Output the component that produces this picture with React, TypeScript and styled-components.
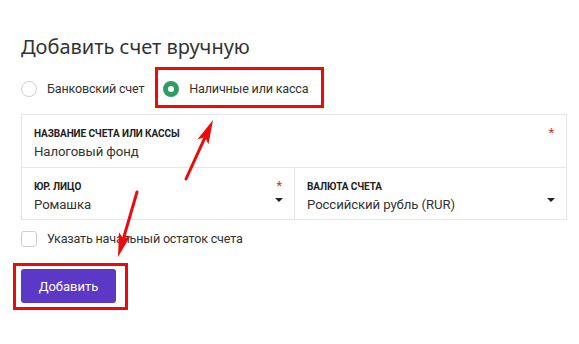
import React from "react";
import styled, { createGlobalStyle } from "styled-components";

const GlobalStyle = createGlobalStyle`
  html, body { margin: 0; padding: 0; background: #ffffff; }
  body { font-family: Roboto, "Noto Sans", sans-serif; color: #333333; }
  * { box-sizing: border-box; }
`;

const Page = styled.div`
  position: relative;
  width: 579px;
  height: 344px;
  padding: 35px 12px 0 21px;
  overflow: hidden;
`;

const Title = styled.h1`
  margin: 0;
  font-family: "Noto Sans", "Open Sans", sans-serif;
  font-size: 20px;
  line-height: 24px;
  font-weight: 400;
  color: #333333;
`;

const RadioRow = styled.div`
  display: flex;
  align-items: center;
  gap: 19px;
  margin-top: 22px;
  height: 16px;
`;

const Option = styled.label<{ $highlight?: boolean }>`
  position: relative;
  display: flex;
  align-items: center;
  gap: 10px;
  font-size: 12.6px;
  letter-spacing: -0.2px;
  color: #333333;
  line-height: 16px;
  &::after {
    content: "";
    display: ${(p) => (p.$highlight ? "block" : "none")};
    position: absolute;
    left: -8px;
    right: -16px;
    top: -14px;
    bottom: -11px;
    border: 3px solid #ee0a0a;
    pointer-events: none;
  }
`;

const RadioCircle = styled.span<{ $checked?: boolean }>`
  width: 16px;
  height: 16px;
  border-radius: 50%;
  flex: none;
  border: ${(p) => (p.$checked ? "5px solid #2e9c64" : "1px solid #cfcfcf")};
  background: #ffffff;
`;

const Panel = styled.div`
  margin-top: 17px;
  width: 546px;
  border: 1px solid #e6e6e6;
  display: grid;
  grid-template-columns: 273px 1fr;
  grid-template-rows: 52px 52px;
`;

const Cell = styled.div<{ $wide?: boolean; $divider?: boolean; $bottom?: boolean }>`
  position: relative;
  grid-column: ${(p) => (p.$wide ? "1 / 3" : "auto")};
  padding: 12px 14px 0 12px;
  border-top: ${(p) => (p.$bottom ? "1px solid #e6e6e6" : "none")};
  border-right: ${(p) => (p.$divider ? "1px solid #e6e6e6" : "none")};
`;

const Label = styled.div`
  font-family: Roboto, "Noto Sans", sans-serif;
  font-weight: 700;
  font-size: 10px;
  line-height: 14px;
  color: #222222;
  text-transform: uppercase;
  letter-spacing: -0.1px;
`;

const Value = styled.div`
  font-size: 13.2px;
  letter-spacing: -0.1px;
  line-height: 20px;
  color: #333333;
  margin-top: 1px;
`;

const Required = styled.span`
  position: absolute;
  right: 12px;
  top: 11px;
  color: #d93030;
  font-size: 13px;
  line-height: 14px;
`;

const Caret = styled.span`
  position: absolute;
  right: 11px;
  top: 30px;
  width: 0;
  height: 0;
  border-left: 4px solid transparent;
  border-right: 4px solid transparent;
  border-top: 4px solid #222222;
`;

const CheckRow = styled.label`
  display: flex;
  align-items: center;
  gap: 10px;
  margin-top: 11px;
  font-size: 12.6px;
  letter-spacing: -0.2px;
  line-height: 16px;
  color: #333333;
`;

const CheckBox = styled.span`
  width: 16px;
  height: 16px;
  flex: none;
  border: 1px solid #cfcfcf;
  border-radius: 3px;
  background: #ffffff;
`;

const ButtonWrap = styled.div`
  position: relative;
  display: inline-block;
  margin-top: 22px;
  &::after {
    content: "";
    position: absolute;
    left: -8px;
    right: -12px;
    top: -6px;
    bottom: -7px;
    border: 3px solid #ee0a0a;
    pointer-events: none;
  }
`;

const Button = styled.button`
  display: block;
  width: 95px;
  height: 34px;
  border: none;
  border-radius: 3px;
  background: #5c38c6;
  color: #ffffff;
  font-family: Roboto, "Noto Sans", sans-serif;
  font-size: 13px;
  padding: 0;
`;

const Overlay = styled.svg`
  position: absolute;
  left: 0;
  top: 0;
  width: 579px;
  height: 344px;
  pointer-events: none;
`;

function Arrow({ x1, y1, x2, y2 }: { x1: number; y1: number; x2: number; y2: number }) {
  const dx = x2 - x1;
  const dy = y2 - y1;
  const len = Math.sqrt(dx * dx + dy * dy);
  const ux = dx / len;
  const uy = dy / len;
  const headLen = 24;
  const headW = 6;
  const bx = x2 - ux * headLen;
  const by = y2 - uy * headLen;
  const px = -uy;
  const py = ux;
  return (
    <g>
      <line x1={x1} y1={y1} x2={bx + ux * 4} y2={by + uy * 4} stroke="#ee0a0a" strokeWidth={3} strokeLinecap="round" />
      <polygon
        points={`${x2},${y2} ${bx + px * headW},${by + py * headW} ${bx + ux * 5},${by + uy * 5} ${bx - px * headW},${by - py * headW}`}
        fill="#ee0a0a"
      />
    </g>
  );
}

export default function App() {
  return (
    <>
      <GlobalStyle />
      <Page>
        <Title>Добавить счет вручную</Title>
        <RadioRow>
          <Option>
            <RadioCircle />
            Банковский счет
          </Option>
          <Option $highlight>
            <RadioCircle $checked />
            Наличные или касса
          </Option>
        </RadioRow>
        <Panel>
          <Cell $wide>
            <Label>Название счета или кассы</Label>
            <Value>Налоговый фонд</Value>
            <Required>*</Required>
          </Cell>
          <Cell $bottom $divider>
            <Label>Юр. лицо</Label>
            <Value>Ромашка</Value>
            <Required>*</Required>
            <Caret />
          </Cell>
          <Cell $bottom>
            <Label>Валюта счета</Label>
            <Value>Российский рубль (RUR)</Value>
            <Caret />
          </Cell>
        </Panel>
        <CheckRow>
          <CheckBox />
          Указать начальный остаток счета
        </CheckRow>
        <ButtonWrap>
          <Button>Добавить</Button>
        </ButtonWrap>
        <Overlay viewBox="0 0 579 344">
          <Arrow x1={186} y1={179} x2={213} y2={120} />
          <Arrow x1={137} y1={192} x2={118} y2={257} />
        </Overlay>
      </Page>
    </>
  );
}
